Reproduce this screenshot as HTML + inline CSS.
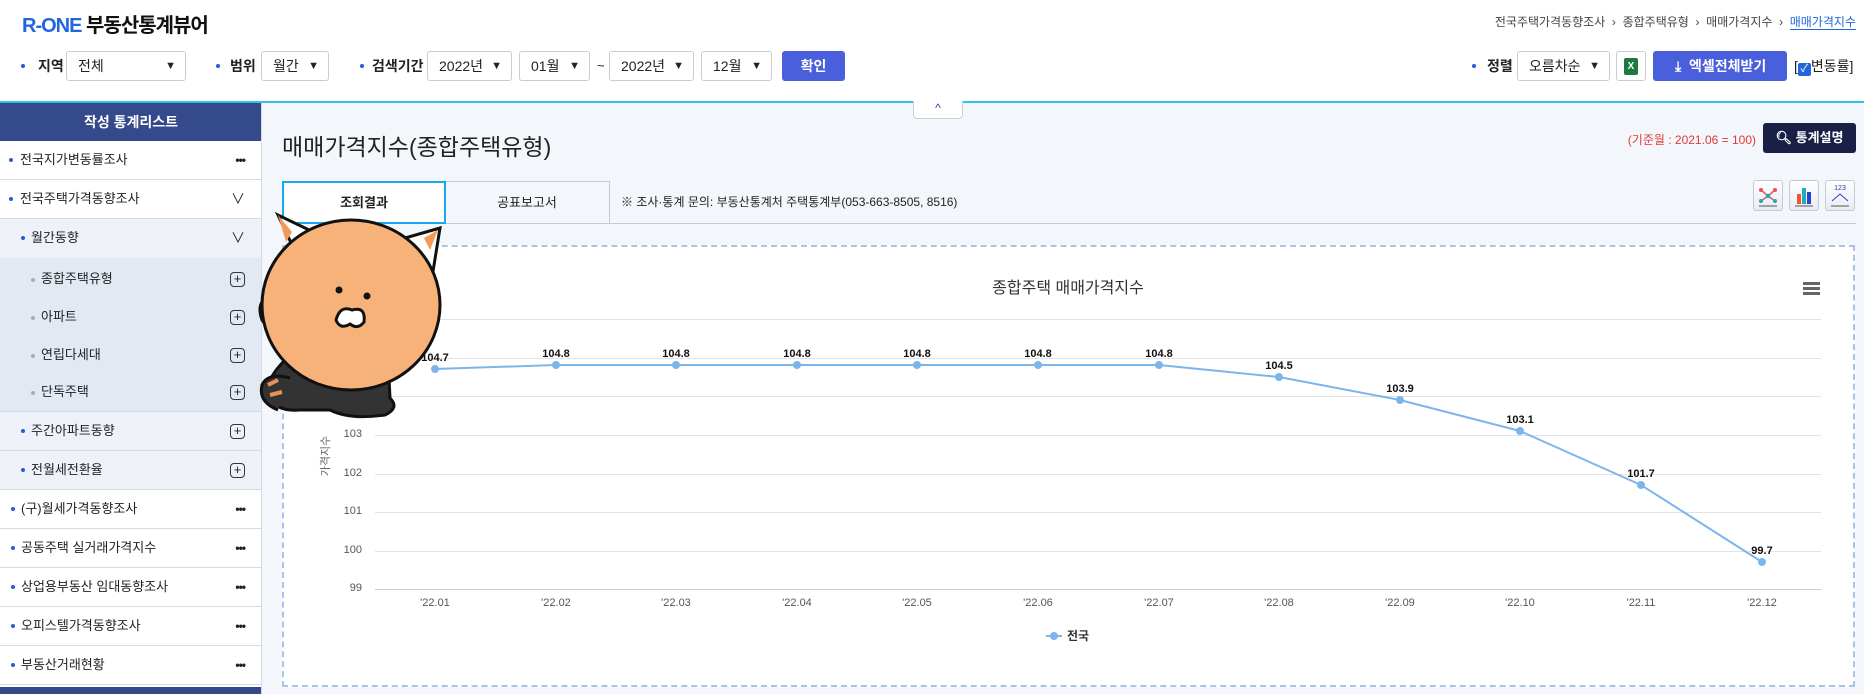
<!DOCTYPE html>
<html><head><meta charset="utf-8">
<style>
*{box-sizing:border-box;margin:0;padding:0}
body{width:1864px;height:694px;overflow:hidden;background:#fff;font-family:"Liberation Sans","Noto Sans CJK KR",sans-serif;color:#222;position:relative;font-size:13px}
.a{position:absolute}
.sel{position:absolute;top:51px;height:30px;border:1px solid #c9ccd4;border-radius:3px;background:#fff;font-size:14px;line-height:28px;padding-left:11px;font-weight:normal}
.sel:after{content:"▼";position:absolute;right:9px;top:0;font-size:11px}
.lab{position:absolute;top:56px;font-size:14px;font-weight:bold;line-height:20px}
.dot{position:absolute;width:4px;height:4px;border-radius:50%;background:#2a5bd7}
.side div.r{position:absolute;left:0;width:261px;height:39px;border-bottom:1px solid #d4dae6;font-size:13px;line-height:38px;font-weight:normal}
.plus{position:absolute;right:16px;top:12px;width:15px;height:15px;border:1px solid #334;border-radius:4px;font-size:13px;line-height:12px;text-align:center}
.dots{position:absolute;right:16px;top:0;font-size:12px;letter-spacing:-1px;font-weight:bold}
.grid{position:absolute;left:375px;width:1446px;height:1px;background:#e3e3e3}
.yl{position:absolute;left:332px;width:30px;text-align:right;font-size:11px;color:#555}
.xl{position:absolute;top:597px;width:50px;text-align:center;font-size:11px;color:#555}
</style></head><body>
<div class="a" style="left:22px;top:9px;font-size:20px;font-weight:bold;letter-spacing:-1px"><span style="color:#2266dd">R-ONE</span> <span style="color:#111">부동산통계뷰어</span></div>
<div class="a" style="right:8px;top:13px;font-size:12px;color:#444">전국주택가격동향조사 &nbsp;›&nbsp; 종합주택유형 &nbsp;›&nbsp; 매매가격지수 &nbsp;›&nbsp; <span style="color:#2266dd;border-bottom:1px solid #2266dd">매매가격지수</span></div>

<div class="dot" style="left:21px;top:64px"></div><div class="lab" style="left:38px">지역</div>
<div class="sel" style="left:66px;width:120px">전체</div>
<div class="dot" style="left:216px;top:64px"></div><div class="lab" style="left:230px">범위</div>
<div class="sel" style="left:261px;width:68px">월간</div>
<div class="dot" style="left:360px;top:64px"></div><div class="lab" style="left:372px">검색기간</div>
<div class="sel" style="left:427px;width:85px">2022년</div>
<div class="sel" style="left:519px;width:71px">01월</div>
<div class="a" style="left:597px;top:58px">~</div>
<div class="sel" style="left:609px;width:85px">2022년</div>
<div class="sel" style="left:701px;width:71px">12월</div>
<div class="a" style="left:782px;top:51px;width:63px;height:30px;background:#4a5fdc;border-radius:3px;color:#fff;font-size:14px;font-weight:bold;text-align:center;line-height:30px">확인</div>

<div class="dot" style="left:1472px;top:64px"></div><div class="lab" style="left:1487px">정렬</div>
<div class="sel" style="left:1517px;width:93px">오름차순</div>
<div class="a" style="left:1616px;top:51px;width:30px;height:30px;border:1px solid #c9ccd4;border-radius:3px;background:#fff"><div class="a" style="left:7px;top:6px;width:14px;height:17px;background:#1e7a3c;border-radius:2px;color:#fff;font-size:10px;line-height:17px;text-align:center;font-weight:bold">X</div></div>
<div class="a" style="left:1653px;top:51px;width:134px;height:30px;background:#4a5fdc;border-radius:3px;color:#fff;font-size:14px;font-weight:bold;line-height:30px;padding-left:22px">⤓ &nbsp;엑셀전체받기</div>
<div class="a" style="left:1794px;top:56px;font-size:14px;line-height:20px">[<span style="display:inline-block;width:13px;height:13px;background:#2266dd;border-radius:2px;color:#fff;font-size:11px;line-height:13px;text-align:center;vertical-align:-1px">✓</span>변동률]</div>

<div class="a" style="left:0;top:101px;width:1864px;height:2px;background:#33c0ee"></div>
<div class="a" style="left:262px;top:103px;width:1602px;height:591px;background:#f3f6fa"></div>
<div class="a" style="left:913px;top:101px;width:50px;height:18px;background:#fff;border:1px solid #ccd;border-top:none;border-radius:0 0 4px 4px;text-align:center;font-size:12px;color:#2244aa;line-height:14px">^</div>

<div class="side">
<div class="a" style="left:0;top:103px;width:262px;height:38px;background:#344a8a;color:#fff;font-weight:bold;font-size:14px;text-align:center;line-height:38px">작성 통계리스트</div>
<div class="r" style="top:141px;background:#fff"><span class="dot" style="left:9px;top:17px"></span><span class="a" style="left:20px">전국지가변동률조사</span><span class="dots">•••</span></div>
<div class="r" style="top:180px;background:#fff"><span class="dot" style="left:9px;top:17px"></span><span class="a" style="left:20px">전국주택가격동향조사</span><span class="a" style="right:16px;font-size:14px">∨</span></div>
<div class="r" style="top:219px;background:#eef2f8;border-bottom:none"><span class="dot" style="left:21px;top:17px"></span><span class="a" style="left:31px">월간동향</span><span class="a" style="right:16px;font-size:14px">∨</span></div>
<div class="a" style="left:0;top:258px;width:261px;height:154px;background:#e3e9f3;border-bottom:1px solid #d4dae6"></div>
<div class="r" style="top:260px;border:none"><span class="dot" style="left:31px;top:18px;background:#aab"></span><span class="a" style="left:41px">종합주택유형</span><span class="plus">+</span></div>
<div class="r" style="top:298px;border:none"><span class="dot" style="left:31px;top:18px;background:#aab"></span><span class="a" style="left:41px">아파트</span><span class="plus">+</span></div>
<div class="r" style="top:336px;border:none"><span class="dot" style="left:31px;top:18px;background:#aab"></span><span class="a" style="left:41px">연립다세대</span><span class="plus">+</span></div>
<div class="r" style="top:373px;border:none"><span class="dot" style="left:31px;top:18px;background:#aab"></span><span class="a" style="left:41px">단독주택</span><span class="plus">+</span></div>
<div class="r" style="top:412px;background:#eef2f8"><span class="dot" style="left:21px;top:17px"></span><span class="a" style="left:31px">주간아파트동향</span><span class="plus">+</span></div>
<div class="r" style="top:451px;background:#eef2f8"><span class="dot" style="left:21px;top:17px"></span><span class="a" style="left:31px">전월세전환율</span><span class="plus">+</span></div>
<div class="r" style="top:490px;background:#fff"><span class="dot" style="left:11px;top:17px"></span><span class="a" style="left:21px">(구)월세가격동향조사</span><span class="dots">•••</span></div>
<div class="r" style="top:529px;background:#fff"><span class="dot" style="left:11px;top:17px"></span><span class="a" style="left:21px">공동주택 실거래가격지수</span><span class="dots">•••</span></div>
<div class="r" style="top:568px;background:#fff"><span class="dot" style="left:11px;top:17px"></span><span class="a" style="left:21px">상업용부동산 임대동향조사</span><span class="dots">•••</span></div>
<div class="r" style="top:607px;background:#fff"><span class="dot" style="left:11px;top:17px"></span><span class="a" style="left:21px">오피스텔가격동향조사</span><span class="dots">•••</span></div>
<div class="r" style="top:646px;background:#fff"><span class="dot" style="left:11px;top:17px"></span><span class="a" style="left:21px">부동산거래현황</span><span class="dots">•••</span></div>
<div class="a" style="left:0;top:687px;width:261px;height:7px;background:#344a8a"></div>
<div class="a" style="left:261px;top:103px;width:1px;height:591px;background:#d4dae6"></div>
</div>

<div class="a" style="left:282px;top:128px;font-size:23px;color:#222">매매가격지수(종합주택유형)</div>
<div class="a" style="left:1580px;top:131px;width:176px;text-align:right;font-size:12px;color:#e03a3a">(기준월 : 2021.06 = 100)</div>
<div class="a" style="left:1763px;top:123px;width:93px;height:30px;background:#1a1f45;border-radius:3px;color:#fff;font-size:13px;font-weight:bold;line-height:30px;text-align:center">🔍︎ 통계설명</div>

<div class="a" style="left:282px;top:223px;width:1574px;height:1px;background:#c5cad8"></div>
<div class="a" style="left:445px;top:181px;width:165px;height:43px;border:1px solid #c5cad8;border-left:none;background:#f3f6fa;font-size:13px;text-align:center;line-height:41px">공표보고서</div>
<div class="a" style="left:282px;top:181px;width:164px;height:43px;border:2px solid #1aa8f0;background:#fff;font-size:13px;font-weight:bold;text-align:center;line-height:39px">조회결과</div>
<div class="a" style="left:621px;top:193px;font-size:12px;color:#222">※ 조사·통계 문의: 부동산통계처 주택통계부(053-663-8505, 8516)</div>
<div class="a" style="left:1753px;top:180px;width:30px;height:31px;border:1px solid #c5cad8;border-radius:3px;background:linear-gradient(#fff,#e8ebf2)"><svg width="28" height="29"><path d="M7 9 L14 15 L21 9 M7 20 L14 15 L21 20" stroke="#e55" stroke-width="1.5" fill="none"/><circle cx="7" cy="9" r="2" fill="#e55"/><circle cx="21" cy="9" r="2" fill="#e55"/><circle cx="14" cy="15" r="2.3" fill="#2ab"/><circle cx="7" cy="20" r="2" fill="#2ab"/><circle cx="21" cy="20" r="2" fill="#2ab"/><path d="M5 25H23" stroke="#555"/></svg></div>
<div class="a" style="left:1789px;top:180px;width:30px;height:31px;border:1px solid #c5cad8;border-radius:3px;background:linear-gradient(#fff,#e8ebf2)"><svg width="28" height="29"><rect x="7" y="13" width="4" height="10" fill="#e53"/><rect x="12" y="7" width="4" height="16" fill="#2ab"/><rect x="17" y="11" width="4" height="12" fill="#24c"/><path d="M5 25H23" stroke="#555"/></svg></div>
<div class="a" style="left:1825px;top:180px;width:30px;height:31px;border:1px solid #c5cad8;border-radius:3px;background:linear-gradient(#fff,#e8ebf2)"><svg width="28" height="29"><text x="14" y="9" font-size="7" text-anchor="middle" fill="#24a" font-family="Liberation Sans">123</text><path d="M6 20L14 13L22 20" stroke="#24c" fill="none"/><path d="M5 25H23" stroke="#555"/></svg></div>

<div class="a" style="left:282px;top:245px;width:1573px;height:442px;border:2px dashed #a9c4e6;background:#fff"></div>
<div class="a" style="left:900px;top:274px;width:336px;text-align:center;font-size:16px;color:#333">종합주택 매매가격지수</div>
<div class="a" style="left:1803px;top:282px;width:17px;height:2.5px;background:#666;box-shadow:0 5px 0 #666,0 10px 0 #666"></div>
<div class="grid" style="top:319px"></div><div class="grid" style="top:358px"></div><div class="grid" style="top:396px"></div>
<div class="grid" style="top:435px"></div><div class="grid" style="top:474px"></div><div class="grid" style="top:512px"></div>
<div class="grid" style="top:551px"></div><div class="grid" style="top:589px;background:#ccd"></div>
<div class="yl" style="top:428px">103</div><div class="yl" style="top:467px">102</div><div class="yl" style="top:505px">101</div><div class="yl" style="top:544px">100</div><div class="yl" style="top:582px">99</div>
<div class="a" style="left:300px;top:448px;transform:rotate(-90deg);font-size:11px;color:#666;width:50px;text-align:center">가격지수</div>
<div class="xl" style="left:410px">'22.01</div><div class="xl" style="left:531px">'22.02</div><div class="xl" style="left:651px">'22.03</div><div class="xl" style="left:772px">'22.04</div><div class="xl" style="left:892px">'22.05</div><div class="xl" style="left:1013px">'22.06</div><div class="xl" style="left:1134px">'22.07</div><div class="xl" style="left:1254px">'22.08</div><div class="xl" style="left:1375px">'22.09</div><div class="xl" style="left:1495px">'22.10</div><div class="xl" style="left:1616px">'22.11</div><div class="xl" style="left:1737px">'22.12</div>
<svg class="a" style="left:0;top:0" width="1864" height="694">
<polyline fill="none" stroke="#7cb5ec" stroke-width="2" points="435,369 556,365 676,365 797,365 917,365 1038,365 1159,365 1279,377 1400,400 1520,431 1641,485 1762,562"/>
<g fill="#7cb5ec"><circle cx="435" cy="369" r="4"/><circle cx="556" cy="365" r="4"/><circle cx="676" cy="365" r="4"/><circle cx="797" cy="365" r="4"/><circle cx="917" cy="365" r="4"/><circle cx="1038" cy="365" r="4"/><circle cx="1159" cy="365" r="4"/><circle cx="1279" cy="377" r="4"/><circle cx="1400" cy="400" r="4"/><circle cx="1520" cy="431" r="4"/><circle cx="1641" cy="485" r="4"/><circle cx="1762" cy="562" r="4"/></g>
<g font-family="Liberation Sans" font-size="11" font-weight="bold" text-anchor="middle" fill="#111">
<text x="435" y="361">104.7</text><text x="556" y="357">104.8</text><text x="676" y="357">104.8</text><text x="797" y="357">104.8</text><text x="917" y="357">104.8</text><text x="1038" y="357">104.8</text><text x="1159" y="357">104.8</text><text x="1279" y="369">104.5</text><text x="1400" y="392">103.9</text><text x="1520" y="423">103.1</text><text x="1641" y="477">101.7</text><text x="1762" y="554">99.7</text></g>
<path d="M1046 636H1062" stroke="#7cb5ec" stroke-width="2"/><circle cx="1054" cy="636" r="4" fill="#7cb5ec"/>
<text x="1067" y="640" font-size="12" font-weight="bold" fill="#333" font-family="Noto Sans CJK KR">전국</text>
<g stroke="#111" stroke-width="3">
<path d="M278 215 L300 262 L330 240 Z" fill="#fff"/><path d="M278 215 L292 232 L286 242Z" fill="#f29a5a" stroke="none"/>
<path d="M440 228 L398 240 L430 290 Z" fill="#fff"/><path d="M438 230 L430 250 L424 238Z" fill="#f29a5a" stroke="none"/>
<path d="M285 360 Q265 380 268 395 Q275 412 300 410 L330 410 Q350 420 385 415 Q400 408 390 398 L388 360 Z" fill="#333"/>
<path d="M278 410 Q258 402 262 385 Q268 372 290 378" fill="#333"/>
<path d="M268 385 L278 380 M270 395 L282 392" stroke="#e8905a" stroke-width="4"/>
<path d="M262 320 Q255 300 272 296 Q292 300 310 350 L300 370 Z" fill="#333"/>
<ellipse cx="351" cy="305" rx="89" ry="85" fill="#f7b27a"/>
</g>
<circle cx="339" cy="290" r="3.5" fill="#111"/><circle cx="367" cy="296" r="3.5" fill="#111"/>
<path d="M336 320 Q340 305 352 310 Q366 306 364 322 Q358 330 350 324 Q340 330 336 320Z" fill="#fff" stroke="#111" stroke-width="3"/>
</svg>
</body></html>
